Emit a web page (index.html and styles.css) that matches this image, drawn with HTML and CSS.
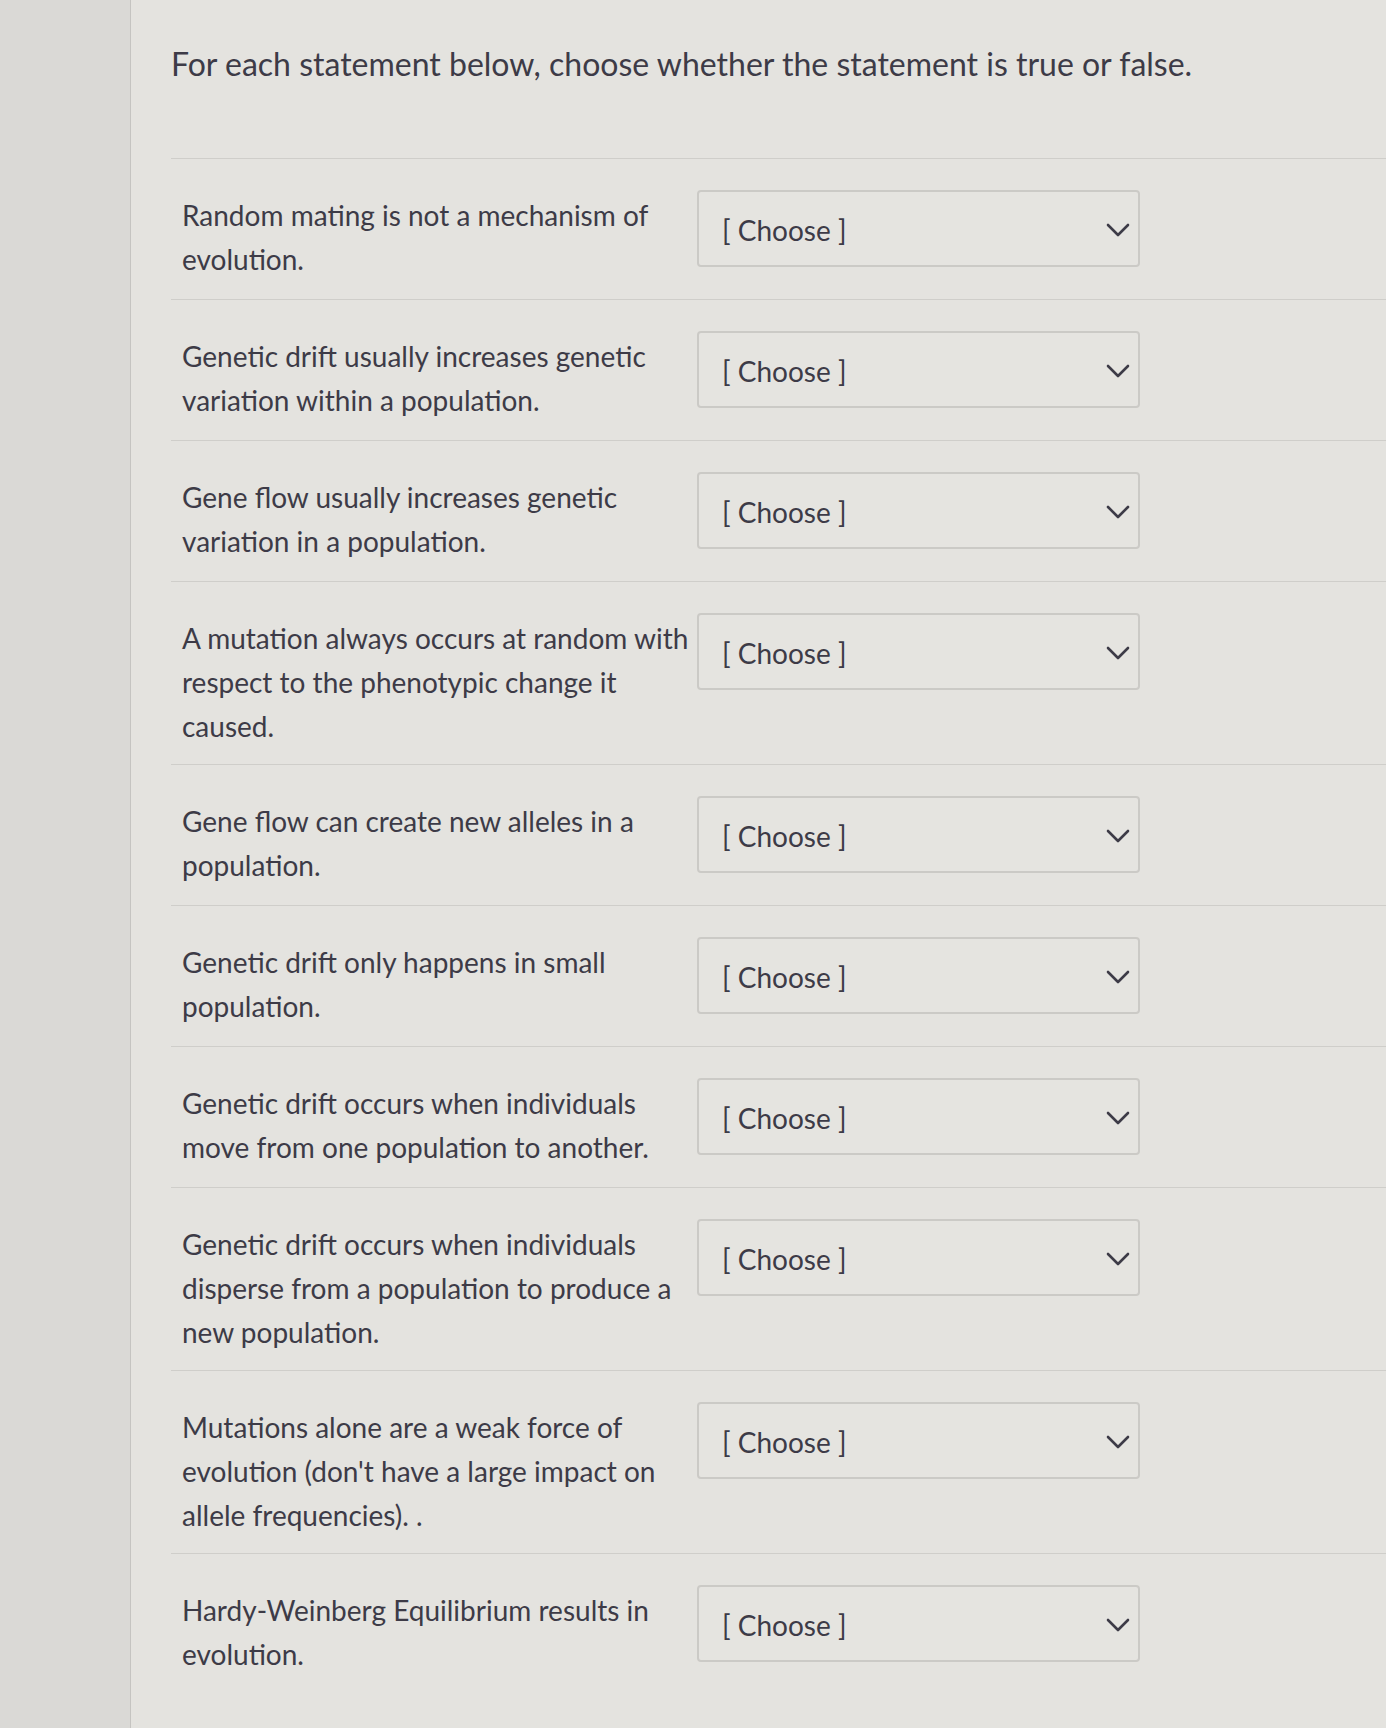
FILE: index.html
```html
<!DOCTYPE html>
<html lang="en">
<head>
<meta charset="utf-8">
<title>True or False</title>
<link rel="stylesheet" href="styles.css">
</head>
<body>
<div class="page">
  <aside class="side"></aside>
  <main class="main">
    <h1 class="prompt">For each statement below, choose whether the statement is true or false.</h1>
    <div class="list">
      <div class="row"><div class="stmt">Random mating is not a mechanism of evolution.</div><div class="select"><span>[ Choose ]</span><svg class="chev" viewBox="0 0 24 14" width="24" height="14"><path d="M2 2 L12 12 L22 2" /></svg></div></div>
      <div class="row"><div class="stmt">Genetic drift usually increases genetic variation within a population.</div><div class="select"><span>[ Choose ]</span><svg class="chev" viewBox="0 0 24 14" width="24" height="14"><path d="M2 2 L12 12 L22 2" /></svg></div></div>
      <div class="row"><div class="stmt">Gene flow usually increases genetic variation in a population.</div><div class="select"><span>[ Choose ]</span><svg class="chev" viewBox="0 0 24 14" width="24" height="14"><path d="M2 2 L12 12 L22 2" /></svg></div></div>
      <div class="row"><div class="stmt">A mutation always occurs at random with respect to the phenotypic change it caused.</div><div class="select"><span>[ Choose ]</span><svg class="chev" viewBox="0 0 24 14" width="24" height="14"><path d="M2 2 L12 12 L22 2" /></svg></div></div>
      <div class="row"><div class="stmt">Gene flow can create new alleles in a population.</div><div class="select"><span>[ Choose ]</span><svg class="chev" viewBox="0 0 24 14" width="24" height="14"><path d="M2 2 L12 12 L22 2" /></svg></div></div>
      <div class="row"><div class="stmt">Genetic drift only happens in small population.</div><div class="select"><span>[ Choose ]</span><svg class="chev" viewBox="0 0 24 14" width="24" height="14"><path d="M2 2 L12 12 L22 2" /></svg></div></div>
      <div class="row"><div class="stmt">Genetic drift occurs when individuals move from one population to another.</div><div class="select"><span>[ Choose ]</span><svg class="chev" viewBox="0 0 24 14" width="24" height="14"><path d="M2 2 L12 12 L22 2" /></svg></div></div>
      <div class="row"><div class="stmt">Genetic drift occurs when individuals disperse from a population to produce a new population.</div><div class="select"><span>[ Choose ]</span><svg class="chev" viewBox="0 0 24 14" width="24" height="14"><path d="M2 2 L12 12 L22 2" /></svg></div></div>
      <div class="row"><div class="stmt">Mutations alone are a weak force of evolution (don't have a large impact on allele frequencies). .</div><div class="select"><span>[ Choose ]</span><svg class="chev" viewBox="0 0 24 14" width="24" height="14"><path d="M2 2 L12 12 L22 2" /></svg></div></div>
      <div class="row last"><div class="stmt">Hardy-Weinberg Equilibrium results in evolution.</div><div class="select"><span>[ Choose ]</span><svg class="chev" viewBox="0 0 24 14" width="24" height="14"><path d="M2 2 L12 12 L22 2" /></svg></div></div>
    </div>
  </main>
</div>
</body>
</html>
```
FILE: styles.css
```css
html, body {
  margin: 0;
  padding: 0;
}
body {
  background: #e4e3df;
  font-family: Lato, "Open Sans", sans-serif;
  color: #3d3b47;
}
.page {
  display: flex;
  min-height: 1728px;
}
.side {
  width: 130px;
  flex: 0 0 130px;
  background: #dad9d6;
  border-right: 1px solid #c5c4c1;
}
.main {
  flex: 1;
  padding-left: 40px;
}
.prompt {
  font-size: 32px;
  font-weight: 400;
  line-height: 38px;
  margin: 45px 0 75px 0;
}
.list {
  border-top: 1px solid #cfceca;
}
.row {
  display: flex;
  align-items: flex-start;
  padding: 31px 0 16px 11px;
  border-bottom: 1px solid #cfceca;
}
.row.last {
  border-bottom: none;
}
.stmt {
  width: 515px;
  flex: 0 0 515px;
  font-size: 28px;
  line-height: 44px;
  margin-top: 3px;
}
.select {
  box-sizing: border-box;
  width: 443px;
  height: 77px;
  margin-bottom: 16px;
  border: 2px solid #cbcac6;
  border-radius: 4px;
  background: #e5e4e0;
  display: flex;
  align-items: center;
  justify-content: space-between;
  padding: 2px 8px 0 23px;
  font-size: 28px;
}
.chev {
  fill: none;
  stroke: #3d3b47;
  stroke-width: 2.6;
  stroke-linecap: round;
  stroke-linejoin: round;
}
```
